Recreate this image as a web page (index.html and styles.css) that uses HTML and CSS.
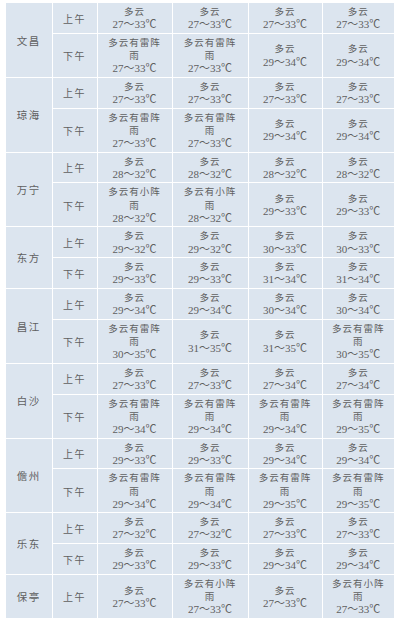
FILE: index.html
```html
<!DOCTYPE html>
<html lang="zh-CN">
<head>
<meta charset="utf-8">
<title>天气预报</title>
<link rel="stylesheet" href="styles.css">
</head>
<body>
<table class="wx">
<colgroup><col class="c-city"><col class="c-per"><col class="c-d1"><col class="c-d2"><col class="c-d3"><col class="c-d4"></colgroup>
<tbody>
<tr><td class="city" rowspan="2">文昌</td><td class="per">上午</td>
<td><span class="w">多云</span><span class="t">27～33℃</span></td>
<td><span class="w">多云</span><span class="t">27～33℃</span></td>
<td><span class="w">多云</span><span class="t">27～33℃</span></td>
<td><span class="w">多云</span><span class="t">27～33℃</span></td></tr>
<tr><td class="per">下午</td>
<td><span class="w">多云有雷阵<br>雨</span><span class="t">27～33℃</span></td>
<td><span class="w">多云有雷阵<br>雨</span><span class="t">27～33℃</span></td>
<td><span class="w">多云</span><span class="t">29～34℃</span></td>
<td><span class="w">多云</span><span class="t">29～34℃</span></td></tr>

<tr><td class="city" rowspan="2">琼海</td><td class="per">上午</td>
<td><span class="w">多云</span><span class="t">27～33℃</span></td>
<td><span class="w">多云</span><span class="t">27～33℃</span></td>
<td><span class="w">多云</span><span class="t">27～33℃</span></td>
<td><span class="w">多云</span><span class="t">27～33℃</span></td></tr>
<tr><td class="per">下午</td>
<td><span class="w">多云有雷阵<br>雨</span><span class="t">27～33℃</span></td>
<td><span class="w">多云有雷阵<br>雨</span><span class="t">27～33℃</span></td>
<td><span class="w">多云</span><span class="t">29～34℃</span></td>
<td><span class="w">多云</span><span class="t">29～34℃</span></td></tr>

<tr><td class="city" rowspan="2">万宁</td><td class="per">上午</td>
<td><span class="w">多云</span><span class="t">28～32℃</span></td>
<td><span class="w">多云</span><span class="t">28～32℃</span></td>
<td><span class="w">多云</span><span class="t">28～32℃</span></td>
<td><span class="w">多云</span><span class="t">28～32℃</span></td></tr>
<tr><td class="per">下午</td>
<td><span class="w">多云有小阵<br>雨</span><span class="t">28～32℃</span></td>
<td><span class="w">多云有小阵<br>雨</span><span class="t">28～32℃</span></td>
<td><span class="w">多云</span><span class="t">29～33℃</span></td>
<td><span class="w">多云</span><span class="t">29～33℃</span></td></tr>

<tr><td class="city" rowspan="2">东方</td><td class="per">上午</td>
<td><span class="w">多云</span><span class="t">29～32℃</span></td>
<td><span class="w">多云</span><span class="t">29～32℃</span></td>
<td><span class="w">多云</span><span class="t">30～33℃</span></td>
<td><span class="w">多云</span><span class="t">30～33℃</span></td></tr>
<tr><td class="per">下午</td>
<td><span class="w">多云</span><span class="t">29～33℃</span></td>
<td><span class="w">多云</span><span class="t">29～33℃</span></td>
<td><span class="w">多云</span><span class="t">31～34℃</span></td>
<td><span class="w">多云</span><span class="t">31～34℃</span></td></tr>

<tr><td class="city" rowspan="2">昌江</td><td class="per">上午</td>
<td><span class="w">多云</span><span class="t">29～34℃</span></td>
<td><span class="w">多云</span><span class="t">29～34℃</span></td>
<td><span class="w">多云</span><span class="t">30～34℃</span></td>
<td><span class="w">多云</span><span class="t">30～34℃</span></td></tr>
<tr><td class="per">下午</td>
<td><span class="w">多云有雷阵<br>雨</span><span class="t">30～35℃</span></td>
<td><span class="w">多云</span><span class="t">31～35℃</span></td>
<td><span class="w">多云</span><span class="t">31～35℃</span></td>
<td><span class="w">多云有雷阵<br>雨</span><span class="t">30～35℃</span></td></tr>

<tr><td class="city" rowspan="2">白沙</td><td class="per">上午</td>
<td><span class="w">多云</span><span class="t">27～33℃</span></td>
<td><span class="w">多云</span><span class="t">27～33℃</span></td>
<td><span class="w">多云</span><span class="t">27～34℃</span></td>
<td><span class="w">多云</span><span class="t">27～34℃</span></td></tr>
<tr><td class="per">下午</td>
<td><span class="w">多云有雷阵<br>雨</span><span class="t">29～34℃</span></td>
<td><span class="w">多云有雷阵<br>雨</span><span class="t">29～34℃</span></td>
<td><span class="w">多云有雷阵<br>雨</span><span class="t">29～34℃</span></td>
<td><span class="w">多云有雷阵<br>雨</span><span class="t">29～35℃</span></td></tr>

<tr><td class="city" rowspan="2">儋州</td><td class="per">上午</td>
<td><span class="w">多云</span><span class="t">29～33℃</span></td>
<td><span class="w">多云</span><span class="t">29～33℃</span></td>
<td><span class="w">多云</span><span class="t">29～34℃</span></td>
<td><span class="w">多云</span><span class="t">29～34℃</span></td></tr>
<tr><td class="per">下午</td>
<td><span class="w">多云有雷阵<br>雨</span><span class="t">29～34℃</span></td>
<td><span class="w">多云有雷阵<br>雨</span><span class="t">29～34℃</span></td>
<td><span class="w">多云有雷阵<br>雨</span><span class="t">29～35℃</span></td>
<td><span class="w">多云有雷阵<br>雨</span><span class="t">29～35℃</span></td></tr>

<tr><td class="city" rowspan="2">乐东</td><td class="per">上午</td>
<td><span class="w">多云</span><span class="t">27～32℃</span></td>
<td><span class="w">多云</span><span class="t">27～32℃</span></td>
<td><span class="w">多云</span><span class="t">27～33℃</span></td>
<td><span class="w">多云</span><span class="t">27～33℃</span></td></tr>
<tr><td class="per">下午</td>
<td><span class="w">多云</span><span class="t">29～33℃</span></td>
<td><span class="w">多云</span><span class="t">29～33℃</span></td>
<td><span class="w">多云</span><span class="t">29～34℃</span></td>
<td><span class="w">多云</span><span class="t">29～34℃</span></td></tr>

<tr><td class="city">保亭</td><td class="per">上午</td>
<td><span class="w">多云</span><span class="t">27～33℃</span></td>
<td><span class="w">多云有小阵<br>雨</span><span class="t">27～33℃</span></td>
<td><span class="w">多云</span><span class="t">27～33℃</span></td>
<td><span class="w">多云有小阵<br>雨</span><span class="t">27～33℃</span></td></tr>
</tbody>
</table>
</body>
</html>
```

FILE: styles.css
```css
html, body {
  margin: 0;
  padding: 0;
  background: #ffffff;
}
body {
  padding: 3px 6px 0 6px;
  font-family: "Noto Sans CJK SC", "Noto Sans", sans-serif;
  color: #5f5f5f;
}
.wx {
  width: 388px;
  table-layout: fixed;
  border-collapse: collapse;
  background: #dce5ef;
}
.c-city { width: 46px; }
.c-per { width: 45px; }
.c-d1 { width: 75px; }
.c-d2 { width: 76px; }
.c-d3 { width: 74px; }
.c-d4 { width: 72px; }
.wx td {
  border: 1.5px solid #ffffff;
  padding: 2px 0 1.5px 0;
  text-align: center;
  vertical-align: middle;
  line-height: 13.15px;
}
.wx tr:first-child td { border-top: 0; }
.wx td:first-child { border-left: 0; }
.wx td:last-child { border-right: 0; }
.wx tr:last-child td { border-bottom: 0; }
.city {
  font-size: 10.5px;
  letter-spacing: 1.5px;
}
.per {
  font-size: 10px;
  letter-spacing: 1.5px;
}
.w {
  display: block;
  font-size: 9.5px;
  letter-spacing: 1px;
}
.t {
  display: block;
  font-family: "Liberation Serif", "Noto Sans CJK SC", serif;
  font-size: 11px;
  letter-spacing: 0;
}
```
